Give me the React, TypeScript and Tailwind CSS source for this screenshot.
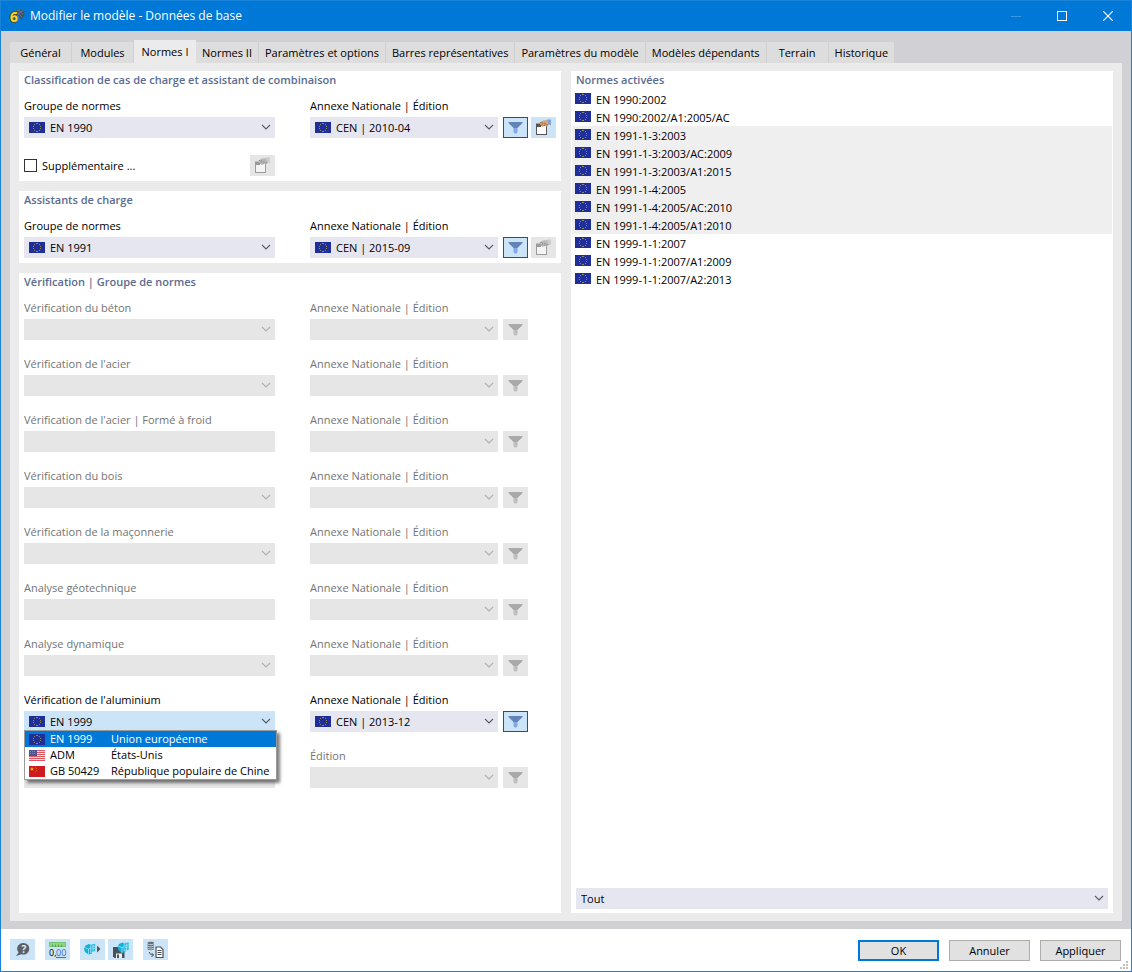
import React from "react";

type Flag = "eu" | "us" | "cn";

function FlagIcon({ flag }: { flag: Flag }) {
  if (flag === "us") {
    return (
      <svg width="16" height="11" viewBox="0 0 16 11" aria-hidden="true" className="shrink-0">
        <rect width="16" height="11" fill="#f6dfe2" />
        {[0, 2, 4, 6, 8, 10].map((y) => (
          <rect key={y} y={y} width="16" height="1" fill="#dc5560" />
        ))}
        <rect width="8" height="6" fill="#50558f" />
        <path d="M1 1.500h6M1 3.500h6" stroke="#8186b2" strokeDasharray="1 1" />
      </svg>
    );
  }
  if (flag === "cn") {
    return (
      <svg width="16" height="11" viewBox="0 0 16 11" aria-hidden="true" className="shrink-0">
        <rect width="16" height="11" fill="#cf1a1f" />
        <path d="M3 1l.6 1.400h1.500l-1.200 1 .5 1.500L3 4l-1.400.9.5-1.500-1.200-1h1.500z" fill="#f5b020" />
        <path d="M6 1h1M7 2.500h1M7 4.500h1M6 6h1" stroke="#e0701a" strokeWidth=".8" />
      </svg>
    );
  }
  return (
    <svg width="16" height="11" viewBox="0 0 16 11" aria-hidden="true" className="shrink-0">
      <rect width="16" height="11" fill="#202f97" />
      <path
        d="M7 1h2v1H7zM5 2h1v1H5zM10 2h1v1h-1zM4 4h1v1H4zM11 4h1v1h-1zM4 6h1v1H4zM11 6h1v1h-1zM5 8h1v1H5zM10 8h1v1h-1zM7 9h2v1H7z"
        fill="#8f8768"
      />
    </svg>
  );
}

function Chevron({ muted }: { muted?: boolean }) {
  return (
    <svg
      width="10"
      height="6"
      viewBox="0 0 10 6"
      aria-hidden="true"
      className={`pointer-events-none absolute top-[7px] right-1 ${muted ? "text-[#b0b0b0]" : "text-[#5a5a60]"}`}
    >
      <path d="M1 1l4 4 4-4" fill="none" stroke="currentColor" strokeWidth="1.100" />
    </svg>
  );
}

type ComboProps = {
  id: string;
  label?: string;
  value?: string;
  flag?: Flag;
  open?: boolean;
  arrow?: boolean;
};

function Combo({ id, label, value, flag, open, arrow = true }: ComboProps) {
  const disabled = !value;
  const tone = disabled ? "bg-[#e6e6e6]" : open ? "bg-[#cce4f7]" : "bg-[#e6e6f1]";
  return (
    <div className="relative min-w-0 flex-1">
      <select
        id={id}
        aria-label={label}
        disabled={disabled}
        className={`block h-[21px] w-full appearance-none rounded-none text-black opacity-100 outline-none ${flag ? "pl-[26px]" : "pl-[5px]"} ${tone}`}
      >
        {value && <option>{value}</option>}
      </select>
      {flag && (
        <span className="pointer-events-none absolute top-[5px] left-[5px]">
          <FlagIcon flag={flag} />
        </span>
      )}
      {arrow && <Chevron muted={disabled} />}
    </div>
  );
}

function FilterButton({ active }: { active?: boolean }) {
  return (
    <button
      type="button"
      aria-label="Filtrer"
      disabled={!active}
      className={`flex h-[21px] w-[25px] shrink-0 items-center justify-center ${active ? "border border-[#0a5a9e] bg-[#cce4f7]" : "bg-[#e6e6e6]"}`}
    >
      <svg width="15" height="13" viewBox="0 0 15 13" aria-hidden="true">
        <path d="M.5 1h14v1L9.500 7h-4L.5 2z" fill={active ? "#6384b8" : "#a9a9a9"} />
        <path d="M5.500 7h4v4l-1 1.500h-2l-1-1.500z" fill={active ? "#86a6e8" : "#bdbdbd"} />
      </svg>
    </button>
  );
}

function BoxButton({ active }: { active?: boolean }) {
  const line = active ? "#5a5250" : "#9b9b9b";
  return (
    <button
      type="button"
      aria-label="Modifier"
      disabled={!active}
      className={`flex h-[21px] w-[25px] shrink-0 items-center justify-center ${active ? "bg-[#cce4f7]" : "bg-[#e6e6e6]"}`}
    >
      <svg width="17" height="17" viewBox="0 0 17 17" aria-hidden="true">
        <rect x="1.500" y="6.500" width="10" height="9" fill={active ? "#fff" : "#f4f4f4"} stroke={line} />
        <path d="M1 4.500h5V8H1z" fill={line} />
        <path d="M4.500 3.500L8 1.500l4-.5 2 1v4l-2.500 1.500L10 7 7.500 8 6.500 6.500 5 5.500z" fill={active ? "#d6a67a" : "#bababa"} />
        <path d="M5 3.500l3 .5-1 2M9 4l1.500.5L9 7M11 6l2-.5" fill="none" stroke={active ? "#8d6748" : "#8f8f8f"} strokeWidth=".8" />
        <path d="M12 .500h4v6L13.500 5z" fill={active ? "#7ba3d6" : "#cdcdcd"} />
      </svg>
    </button>
  );
}

function Heading({ children }: { children: React.ReactNode }) {
  return <h2 className="mb-2 h-[18px] truncate leading-[18px] font-semibold text-[#5a6c92]">{children}</h2>;
}

function FieldLabel({ id, muted, children }: { id: string; muted?: boolean; children?: React.ReactNode }) {
  return (
    <label htmlFor={id} className={`mb-0.5 block h-[18px] truncate leading-[18px] ${muted ? "text-[#747474]" : "text-black"}`}>
      {children}
    </label>
  );
}

type RowProps = {
  id: string;
  label?: string;
  group?: string;
  edition?: string;
  editionLabel?: string;
  arrow?: boolean;
  box?: "on" | "off";
  open?: boolean;
  children?: React.ReactNode;
};

function StandardRow({ id, label, group, edition, editionLabel = "Annexe Nationale | Édition", arrow, box, open, children }: RowProps) {
  return (
    <div className="grid grid-cols-[minmax(0,251fr)_minmax(0,246fr)] gap-x-[35px]">
      <div className="relative">
        <FieldLabel id={`${id}-group`} muted={!group}>
          {label}
        </FieldLabel>
        <Combo id={`${id}-group`} value={group} flag={group ? "eu" : undefined} arrow={arrow} open={open} />
        {children}
      </div>
      <div>
        <FieldLabel id={`${id}-edition`} muted={!edition}>
          {editionLabel}
        </FieldLabel>
        <div className="flex">
          <Combo id={`${id}-edition`} value={edition} flag={edition ? "eu" : undefined} />
          <div className="ml-[5px] flex w-[53px] gap-[3px]">
            <FilterButton active={!!edition} />
            {box && <BoxButton active={box === "on"} />}
          </div>
        </div>
      </div>
    </div>
  );
}

const tabs = [
  "Général",
  "Modules",
  "Normes I",
  "Normes II",
  "Paramètres et options",
  "Barres représentatives",
  "Paramètres du modèle",
  "Modèles dépendants",
  "Terrain",
  "Historique",
];

const checks: { id: string; label: string; arrow?: boolean }[] = [
  { id: "beton", label: "Vérification du béton" },
  { id: "acier", label: "Vérification de l'acier" },
  { id: "froid", label: "Vérification de l'acier | Formé à froid", arrow: false },
  { id: "bois", label: "Vérification du bois" },
  { id: "maconnerie", label: "Vérification de la maçonnerie" },
  { id: "geo", label: "Analyse géotechnique", arrow: false },
  { id: "dyn", label: "Analyse dynamique" },
];

const choices: { flag: Flag; code: string; name: string }[] = [
  { flag: "eu", code: "EN 1999", name: "Union européenne" },
  { flag: "us", code: "ADM", name: "États-Unis" },
  { flag: "cn", code: "GB 50429", name: "République populaire de Chine" },
];

const activated = [
  { name: "EN 1990:2002", shaded: false },
  { name: "EN 1990:2002/A1:2005/AC", shaded: false },
  { name: "EN 1991-1-3:2003", shaded: true },
  { name: "EN 1991-1-3:2003/AC:2009", shaded: true },
  { name: "EN 1991-1-3:2003/A1:2015", shaded: true },
  { name: "EN 1991-1-4:2005", shaded: true },
  { name: "EN 1991-1-4:2005/AC:2010", shaded: true },
  { name: "EN 1991-1-4:2005/A1:2010", shaded: true },
  { name: "EN 1999-1-1:2007", shaded: false },
  { name: "EN 1999-1-1:2007/A1:2009", shaded: false },
  { name: "EN 1999-1-1:2007/A2:2013", shaded: false },
];

function ToolButton({ label, children }: { label: string; children: React.ReactNode }) {
  return (
    <button type="button" aria-label={label} className="flex h-[21px] w-[25px] items-center justify-center bg-[#cce4f7]">
      {children}
    </button>
  );
}

function Globe() {
  return (
    <g>
      <path d="M5 1L1.500 2.500 0 5.500 1 9l3.500 2.500L8 10.500V2z" fill="#10b0da" />
      <path d="M.5 4.500l4 1.500v5.500M4.500 6L7 5" fill="none" stroke="#9fe2f6" strokeWidth=".8" />
      <path d="M6.500 1.500L11.500.5v8l-5 1z" fill="#22bfe6" stroke="#d4effb" strokeWidth=".5" />
      <path d="M7.500 4l3.500-.7M7.500 6l3.500-.7M9 2v7" stroke="#bdeafb" strokeWidth=".6" />
    </g>
  );
}

function Toolbar() {
  return (
    <div className="flex">
      <ToolButton label="Aide">
        <svg width="16" height="16" viewBox="0 0 16 16" aria-hidden="true">
          <path d="M9 1a5.800 5.800 0 1 1-2.500 11.200L1 14l2.600-3.500A5.800 5.800 0 0 1 9 1z" fill="#5c6168" />
          <text x="9" y="10.500" textAnchor="middle" fontSize="10" fontWeight="700" fill="#dfeefa">
            ?
          </text>
        </svg>
      </ToolButton>
      <div className="ml-2.5">
        <ToolButton label="Unités et décimales">
          <svg width="17" height="17" viewBox="0 0 17 17" aria-hidden="true" className="overflow-visible">
            <rect x=".5" y="1.500" width="16" height="4" fill="#8fd683" stroke="#76c46c" />
            <path d="M3.500 3.500V6M6.500 3.500V6M9.500 3.500V6M12.500 3.500V6" stroke="#5c9f56" />
            <text x="0" y="15" fontSize="9" fill="#000">
              0,
              <tspan x="7" fill="#4468cc">
                00
              </tspan>
            </text>
            <path d="M7 16.500h10" stroke="#4468cc" />
          </svg>
        </ToolButton>
      </div>
      <div className="ml-2.5 flex gap-[3px]">
        <ToolButton label="Charger un modèle">
          <svg width="17" height="13" viewBox="0 0 17 13" aria-hidden="true">
            <Globe />
            <path d="M13 2.500v7L16.500 6z" fill="#555" />
          </svg>
        </ToolButton>
        <ToolButton label="Enregistrer le modèle">
          <svg width="18" height="18" viewBox="0 0 18 18" aria-hidden="true">
            <path d="M1 6h11.500v11H2.500L1 15.500z" fill="#4c5157" />
            <path d="M4 12.500h6V17H4z" fill="#e8f3fb" />
            <path d="M5 13.500h2V17H5z" fill="#4c5157" />
            <g transform="translate(5.500 .5)">
              <Globe />
            </g>
          </svg>
        </ToolButton>
      </div>
      <div className="ml-2.5">
        <ToolButton label="Gérer les données">
          <svg width="17" height="17" viewBox="0 0 17 17" aria-hidden="true">
            <path d="M.5 1.800C.5.400 7 .400 7 1.800V8c0 1.600-6.500 1.600-6.500 0z" fill="#6c7076" />
            <path d="M.5 2.500c0 1.500 6.500 1.500 6.500 0M.5 4.700c0 1.500 6.500 1.500 6.500 0M.5 6.800c0 1.500 6.500 1.500 6.500 0" fill="none" stroke="#d8e9f6" strokeWidth=".8" />
            <path d="M2.500 11c0 2 1 3 4 3M4.500 12l2 2-2 2" fill="none" stroke="#4c5157" />
            <path d="M9 6h4.500L16 8.500v8H9z" fill="#fff" stroke="#4c5157" strokeWidth="1.200" />
            <path d="M10.500 9.500h4M10.500 11.500h4M10.500 13.500h4" stroke="#4c5157" />
          </svg>
        </ToolButton>
      </div>
    </div>
  );
}

function DialogButton({ primary, children }: { primary?: boolean; children: React.ReactNode }) {
  return (
    <button
      type="button"
      className={`h-[21px] w-[81px] bg-[#e1e1e1] leading-none text-black ${primary ? "border-2 border-[#0078d7]" : "border border-[#adadad]"}`}
    >
      {children}
    </button>
  );
}

export default function App() {
  return (
    <div className="flex min-h-screen flex-col border border-[#1a84da] bg-[#d1d0d5] font-['Open_Sans','Noto_Sans',sans-serif] text-[11px] leading-[18px] text-black">
      <header className="flex h-[30px] items-center bg-[#0078d7] pl-2 text-white">
        <svg width="16" height="16" viewBox="0 0 16 16" aria-hidden="true" className="overflow-visible">
          <path d="M4 4l6-3.500 5 2.500.5 4-3.500 5-2-4z" fill="#3f5468" />
          <path d="M6 3l7 6M9 1.500l5 5M5 5l6-4M9 6l5-3.500" stroke="#7d93a8" strokeWidth=".6" />
          <text
            x="1"
            y="14"
            fontSize="14"
            fontWeight="700"
            fill="#fbd23a"
            stroke="#5b4a14"
            strokeWidth="1.500"
            paintOrder="stroke"
          >
            6
          </text>
        </svg>
        <h1 className="ml-[5px] flex-1 truncate text-xs">Modifier le modèle - Données de base</h1>
        <button type="button" aria-label="Réduire" disabled className="flex h-full w-[46px] items-center justify-center">
          <svg width="10" height="10" aria-hidden="true">
            <path d="M0 5.500h10" stroke="#3a97e0" />
          </svg>
        </button>
        <button type="button" aria-label="Agrandir" className="flex h-full w-[46px] items-center justify-center">
          <svg width="10" height="10" aria-hidden="true">
            <rect x=".5" y=".5" width="9" height="9" fill="none" stroke="#fff" />
          </svg>
        </button>
        <button type="button" aria-label="Fermer" className="flex h-full w-[46px] items-center justify-center">
          <svg width="10" height="10" aria-hidden="true">
            <path d="M0 0l10 10M10 0L0 10" stroke="#fff" strokeWidth="1.100" />
          </svg>
        </button>
      </header>

      <main className="flex flex-1 flex-col px-[9px] pt-[9px] pb-2">
        <div role="tablist" className="flex items-end">
          {tabs.map((t) => {
            const active = t === "Normes I";
            return (
              <button
                key={t}
                type="button"
                role="tab"
                aria-selected={active}
                className={`min-w-[62px] px-1.5 whitespace-nowrap ${active ? "h-[23px] bg-[#ebebeb]" : "h-[21px] border-r border-[#d0d0d0] bg-[#dddddd]"}`}
              >
                {t}
              </button>
            );
          })}
        </div>

        <div className="flex flex-1 gap-2.5 bg-[#ebebeb] px-[9px] py-2">
          <div className="flex min-w-0 flex-1 flex-col gap-2.5">
            <section className="bg-white px-[5px] pb-[5px]">
              <Heading>Classification de cas de charge et assistant de combinaison</Heading>
              <StandardRow id="combo" label="Groupe de normes" group="EN 1990" edition="CEN | 2010-04" box="on" />
              <div className="mt-[17px] grid grid-cols-[minmax(0,251fr)_minmax(0,246fr)] gap-x-[35px]">
                <div className="flex items-center justify-between">
                  <label className="flex items-center gap-[5px]">
                    <input type="checkbox" className="size-[13px] appearance-none border border-[#333] bg-white" />
                    Supplémentaire ...
                  </label>
                  <BoxButton />
                </div>
              </div>
            </section>

            <section className="bg-white px-[5px] pb-[5px]">
              <Heading>Assistants de charge</Heading>
              <StandardRow id="load" label="Groupe de normes" group="EN 1991" edition="CEN | 2015-09" box="off" />
            </section>

            <section className="flex-1 bg-white px-[5px] pb-[5px]">
              <Heading>Vérification | Groupe de normes</Heading>
              <div className="flex flex-col gap-[15px]">
                {checks.map((c) => (
                  <StandardRow key={c.id} id={c.id} label={c.label} arrow={c.arrow} />
                ))}
                <StandardRow id="alu" label="Vérification de l'aluminium" group="EN 1999" edition="CEN | 2013-12" open>
                  <ul
                    role="listbox"
                    aria-label="Groupe de normes"
                    className="absolute top-full left-0 z-10 -mt-0.5 min-w-[253px] border border-[#9a9a9a] bg-white shadow-[3px_3px_3px_rgba(0,0,0,0.5)]"
                  >
                    {choices.map((c, i) => (
                      <li
                        key={c.code}
                        role="option"
                        aria-selected={i === 0}
                        className={`flex h-4 items-center pr-[3px] pl-1 leading-4 whitespace-nowrap ${i === 0 ? "bg-[#0078d7] text-white" : "text-black"}`}
                      >
                        <FlagIcon flag={c.flag} />
                        <span className="ml-[5px] w-[61px]">{c.code}</span>
                        <span>{c.name}</span>
                      </li>
                    ))}
                  </ul>
                </StandardRow>
                <StandardRow id="extra" editionLabel="Édition" />
              </div>
            </section>
          </div>

          <section className="flex min-w-0 flex-1 flex-col bg-white pb-1">
            <h2 className="h-[19px] truncate pl-[5px] leading-[18px] font-semibold text-[#5a6c92]">Normes activées</h2>
            <ul className="mx-px flex-1">
              {activated.map((n) => (
                <li key={n.name} className={`flex h-[18px] items-start gap-[5px] pl-[3px] ${n.shaded ? "bg-[#efefef]" : ""}`}>
                  <span className="pt-[3px]">
                    <FlagIcon flag="eu" />
                  </span>
                  <span className="leading-5">{n.name}</span>
                </li>
              ))}
            </ul>
            <div className="flex px-[5px]">
              <Combo id="activated-filter" label="Filtre des normes" value="Tout" />
            </div>
          </section>
        </div>
      </main>

      <footer className="relative flex h-[42px] items-start justify-between bg-white pt-2.5 pr-2.5 pl-[9px]">
        <Toolbar />
        <div className="flex gap-2.5 pt-px">
          <DialogButton primary>OK</DialogButton>
          <DialogButton>Annuler</DialogButton>
          <DialogButton>Appliquer</DialogButton>
        </div>
        <svg width="8" height="8" viewBox="0 0 8 8" aria-hidden="true" className="absolute right-[3px] bottom-0.5">
          <path d="M6 0h2v2H6zM3 3h2v2H3zM6 3h2v2H6zM0 6h2v2H0zM3 6h2v2H3zM6 6h2v2H6z" fill="#bfbfbf" />
        </svg>
      </footer>
    </div>
  );
}
